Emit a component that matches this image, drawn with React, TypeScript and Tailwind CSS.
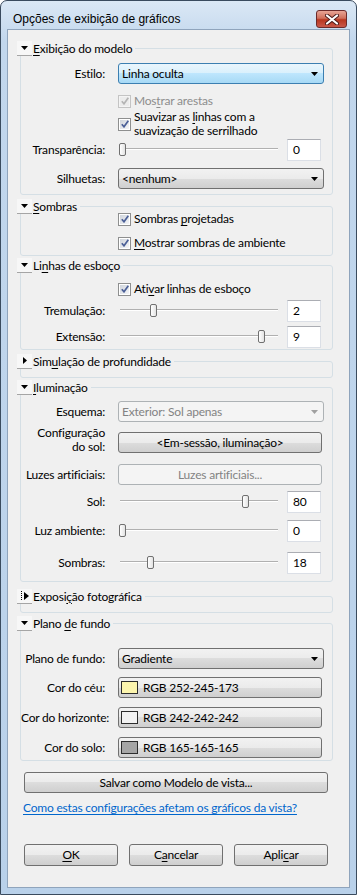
import React from "react";

const u = (s: string) => <span className="underline underline-offset-[2px]">{s}</span>;

function Toggle({ kind }: { kind: "open" | "closed" | "film" }) {
  return (
    <span className="flex h-[15px] w-[15px] shrink-0 items-center justify-center border-b border-[#a5a5a5] bg-[#f7f7f7]">
      {kind === "open" && (
        <svg width="7" height="4" viewBox="0 0 7 4">
          <path d="M0 0h7L3.5 4z" fill="#000" />
        </svg>
      )}
      {kind === "closed" && (
        <svg width="4" height="7" viewBox="0 0 4 7">
          <path d="M0 0v7l4-3.5z" fill="#000" />
        </svg>
      )}
      {kind === "film" && (
        <svg width="10" height="10" viewBox="0 0 10 10">
          <path d="M1.5 0v10" stroke="#000" strokeDasharray="1 1" />
          <path d="M4 1v8l5-4z" fill="#000" />
        </svg>
      )}
    </span>
  );
}

function Group({
  title,
  kind = "open",
  className = "",
  bodyClass = "",
  children,
}: {
  title: React.ReactNode;
  kind?: "open" | "closed" | "film";
  className?: string;
  bodyClass?: string;
  children?: React.ReactNode;
}) {
  return (
    <div className={`ml-[9px] mr-[16px] ${className}`}>
      <div className="relative z-10 flex h-[16px] items-center">
        <Toggle kind={kind} />
        <span className="whitespace-nowrap bg-[#f0f0f0] pl-[1px] pr-[3px] leading-[15px]">{title}</span>
      </div>
      <div className={`-mt-[8px] ml-[3px] rounded-[3px] border border-[#d5dfe5] ${bodyClass}`}>
        {children}
      </div>
    </div>
  );
}

function Row({
  label,
  className = "",
  labelClass = "",
  children,
}: {
  label: React.ReactNode;
  className?: string;
  labelClass?: string;
  children: React.ReactNode;
}) {
  return (
    <div className={`flex items-center ${className}`}>
      <div className={`w-[84px] shrink-0 whitespace-nowrap text-right leading-[14px] ${labelClass}`}>{label}</div>
      <div className="ml-[13px] flex items-center">{children}</div>
    </div>
  );
}

function Check({ disabled, children, className = "" }: { disabled?: boolean; children: React.ReactNode; className?: string }) {
  return (
    <div className={`flex items-center pl-[97px] ${className}`}>
      <span
        className={`flex h-[13px] w-[13px] shrink-0 items-center justify-center border ${
          disabled ? "border-[#c4c4c4] bg-[#f4f4f4]" : "border-[#8e8f8f] bg-white"
        }`}
      >
        <span
          className={`flex h-[9px] w-[9px] items-center justify-center ${
            disabled ? "bg-[#ececec]" : "bg-gradient-to-br from-[#cfd4db] to-[#f4f5f7]"
          }`}
        >
          <svg width="8" height="8" viewBox="0 0 8 8">
            <path
              d="M0.8 4.2 3 6.8 7.3 0.8"
              fill="none"
              stroke={disabled ? "#b4b4b4" : "#4a5f97"}
              strokeWidth="1.7"
            />
          </svg>
        </span>
      </span>
      <span className={`ml-[3px] whitespace-nowrap leading-[14px] ${disabled ? "text-[#8d8d8d]" : ""}`}>{children}</span>
    </div>
  );
}

function Arrow({ color = "#000" }: { color?: string }) {
  return (
    <svg width="7" height="4" viewBox="0 0 7 4" className="shrink-0">
      <path d="M0 0h7L3.5 4z" fill={color} />
    </svg>
  );
}

function Select({ value, focus, disabled }: { value: string; focus?: boolean; disabled?: boolean }) {
  const look = focus
    ? "border-[#3c7fb1] bg-[linear-gradient(#eaf6fd,#d9f0fc_50%,#bee6fd_50%,#a7d9f5)]"
    : disabled
      ? "border-[#adb2b5] bg-[#f4f4f4] text-[#838383]"
      : "border-[#707070] bg-[linear-gradient(#f2f2f2,#ebebeb_50%,#dddddd_50%,#cfcfcf)]";
  return (
    <div className={`flex h-[21px] w-[206px] items-center justify-between rounded-[3px] border pl-[3px] pr-[5px] ${look}`}>
      <span>{value}</span>
      <Arrow color={disabled ? "#a0a0a0" : "#000"} />
    </div>
  );
}

function Button({
  children,
  className = "",
  disabled,
}: {
  children: React.ReactNode;
  className?: string;
  disabled?: boolean;
}) {
  return (
    <div
      className={`flex items-center justify-center whitespace-nowrap rounded-[3px] border ${
        disabled
          ? "border-[#adb2b5] bg-[#f4f4f4] text-[#838383]"
          : "border-[#707070] bg-[linear-gradient(#f2f2f2,#ebebeb_50%,#dddddd_50%,#cfcfcf)]"
      } ${className}`}
    >
      {children}
    </div>
  );
}

function Slider({ pos }: { pos: number }) {
  return (
    <div className="relative h-[22px] w-[162px]">
      <div className="absolute left-[2px] right-[2px] top-[9px] h-[2px] border-t border-b border-t-[#b0b0b0] border-b-white" />
      <div
        className="absolute top-[4px] h-[13px] w-[7px] rounded-[2px] border border-[#707070] bg-[linear-gradient(90deg,#ffffff,#e3e3e3)]"
        style={{ left: pos }}
      />
    </div>
  );
}

function Field({ value }: { value: string }) {
  return (
    <div className="ml-[7px] h-[22px] w-[34px] border border-[#dbdfe6] border-t-[#abadb3] bg-white pl-[5px] leading-[19px]">
      {value}
    </div>
  );
}

function SliderRow({ label, pos, value, className = "" }: { label: React.ReactNode; pos: number; value: string; className?: string }) {
  return (
    <Row label={label} className={className}>
      <Slider pos={pos} />
      <Field value={value} />
    </Row>
  );
}

function ColorButton({ color, text }: { color: string; text: string }) {
  return (
    <Button className="h-[21px] w-[204px] !justify-start pl-[2px]">
      <span className="h-[13px] w-[17px] border border-[#2c2c2c]" style={{ background: color }} />
      <span className="ml-[5px]">{text}</span>
    </Button>
  );
}

export default function App() {
  return (
    <div className="h-[895px] w-[357px] rounded-t-[7px] border border-[#3a4b5e] bg-[linear-gradient(#dbe8f5,#c2d7ed_40px,#b9d1ea)] font-['Lato',Arial,sans-serif] text-[12px] tracking-[-0.2px] text-black">
      {/* title bar */}
      <div className="flex h-[28px] items-start justify-between pl-[12px] pr-[9px]">
        <span className="mt-[11px] font-['Liberation_Sans',Arial,sans-serif] text-[12px] leading-[14px] tracking-normal">
          Opções de exibição de gráficos
        </span>
        <span className="mt-[9px] flex h-[18px] w-[31px] items-center justify-center rounded-[3px] border border-[#6b2a2a] bg-[linear-gradient(#e8a596,#d0705c_45%,#b8361f_55%,#c9584a)]">
          <svg width="14" height="11" viewBox="0 0 14 11">
            <path d="M2 1.5 12 9.5M12 1.5 2 9.5" stroke="#4a1a1a" strokeWidth="4" strokeLinecap="round" />
            <path d="M2 1.5 12 9.5M12 1.5 2 9.5" stroke="#fff" strokeWidth="2.2" strokeLinecap="round" />
          </svg>
        </span>
      </div>

      {/* client */}
      <div className="mx-[6px] h-[859px] border border-[#8fa4bc] bg-[#f0f0f0] pt-[10px]">
        <Group title={<>{u("E")}xibição do modelo</>} bodyClass="pt-[14px] pb-[5px]">
          <Row label="Estilo:">
            <Select value="Linha oculta" focus />
          </Row>
          <Check disabled className="mt-[9px] h-[16px]">
            Mos{u("t")}rar arestas
          </Check>
          <Check className="mt-[1px] h-[28px]">
            Suavizar as {u("l")}inhas com a
            <br />
            suavização de serrilhado
          </Check>
          <SliderRow label="Transparência:" pos={1} value="0" className="mt-[1px]" />
          <Row label="Silhuetas:" className="mt-[7px]">
            <Select value="<nenhum>" />
          </Row>
        </Group>

        <Group title={<>{u("S")}ombras</>} className="mt-[3px]" bodyClass="pt-[4px] pb-[4px]">
          <Check className="h-[16px]">
            Sombras {u("p")}rojetadas
          </Check>
          <Check className="mt-[8px] h-[16px]">
            {u("M")}ostrar sombras de ambiente
          </Check>
        </Group>

        <Group title={<>Li{u("n")}has de esboço</>} className="mt-[1px]" bodyClass="pt-[15px] pb-[1px]">
          <Check className="h-[16px]">
            Ati{u("v")}ar linhas de esboço
          </Check>
          <SliderRow label="Tremulação:" pos={32} value="2" className="mt-[3px]" />
          <SliderRow label="Extensão:" pos={140} value="9" className="mt-[4px]" />
        </Group>

        <Group title={<>Sim{u("u")}lação de profundidade</>} kind="closed" className="mt-[3px]" bodyClass="h-[17px]" />

        <Group title={<>{u("I")}luminação</>} className="mt-[1px]" bodyClass="pt-[13px] pb-[7px]">
          <Row label="Esquema:">
            <Select value="Exterior: Sol apenas" disabled />
          </Row>
          <Row
            label={
              <>
                Configuração
                <br />
                do sol:
              </>
            }
            className="mt-[10px] h-[21px]"
            labelClass="mb-[6px]"
          >
            <Button className="h-[21px] w-[204px]">&lt;Em-sessão, iluminação&gt;</Button>
          </Row>
          <Row label="Luzes artificiais:" className="mt-[11px]">
            <Button disabled className="h-[21px] w-[204px]">
              Luzes artificiais...
            </Button>
          </Row>
          <SliderRow label="Sol:" pos={124} value="80" className="mt-[6px]" />
          <SliderRow label="Luz ambiente:" pos={1} value="0" className="mt-[7px]" />
          <SliderRow label="Sombras:" pos={29} value="18" className="mt-[10px]" />
        </Group>

        <Group title={<>Exposi{u("ç")}ão fotográfica</>} kind="film" className="mt-[6px]" bodyClass="h-[17px]" />

        <Group title={<>Plano {u("d")}e fundo</>} className="mt-[2px]" bodyClass="pt-[24px] pb-[2px]">
          <Row label="Plano de fundo:">
            <Select value="Gradiente" />
          </Row>
          <Row label="Cor do céu:" className="mt-[8px]">
            <ColorButton color="rgb(252,245,173)" text="RGB 252-245-173" />
          </Row>
          <Row label="Cor do horizonte:" className="mt-[9px]">
            <ColorButton color="rgb(242,242,242)" text="RGB 242-242-242" />
          </Row>
          <Row label="Cor do solo:" className="mt-[9px]">
            <ColorButton color="rgb(165,165,165)" text="RGB 165-165-165" />
          </Row>
        </Group>

        <Button className="ml-[16px] mt-[11px] h-[21px] w-[304px]">Salvar como Modelo de vista...</Button>

        <div className="ml-[15px] mt-[8px] whitespace-nowrap leading-[14px] text-[#0066cc] underline underline-offset-[2px]">
          Como estas configurações afetam os gráficos da vista?
        </div>

        <div className="ml-[16px] mt-[29px] flex gap-[11px]">
          <Button className="h-[22px] w-[94px]">{u("O")}K</Button>
          <Button className="h-[22px] w-[94px]">C{u("a")}ncelar</Button>
          <Button className="h-[22px] w-[94px]">Apli{u("c")}ar</Button>
        </div>
      </div>
    </div>
  );
}
